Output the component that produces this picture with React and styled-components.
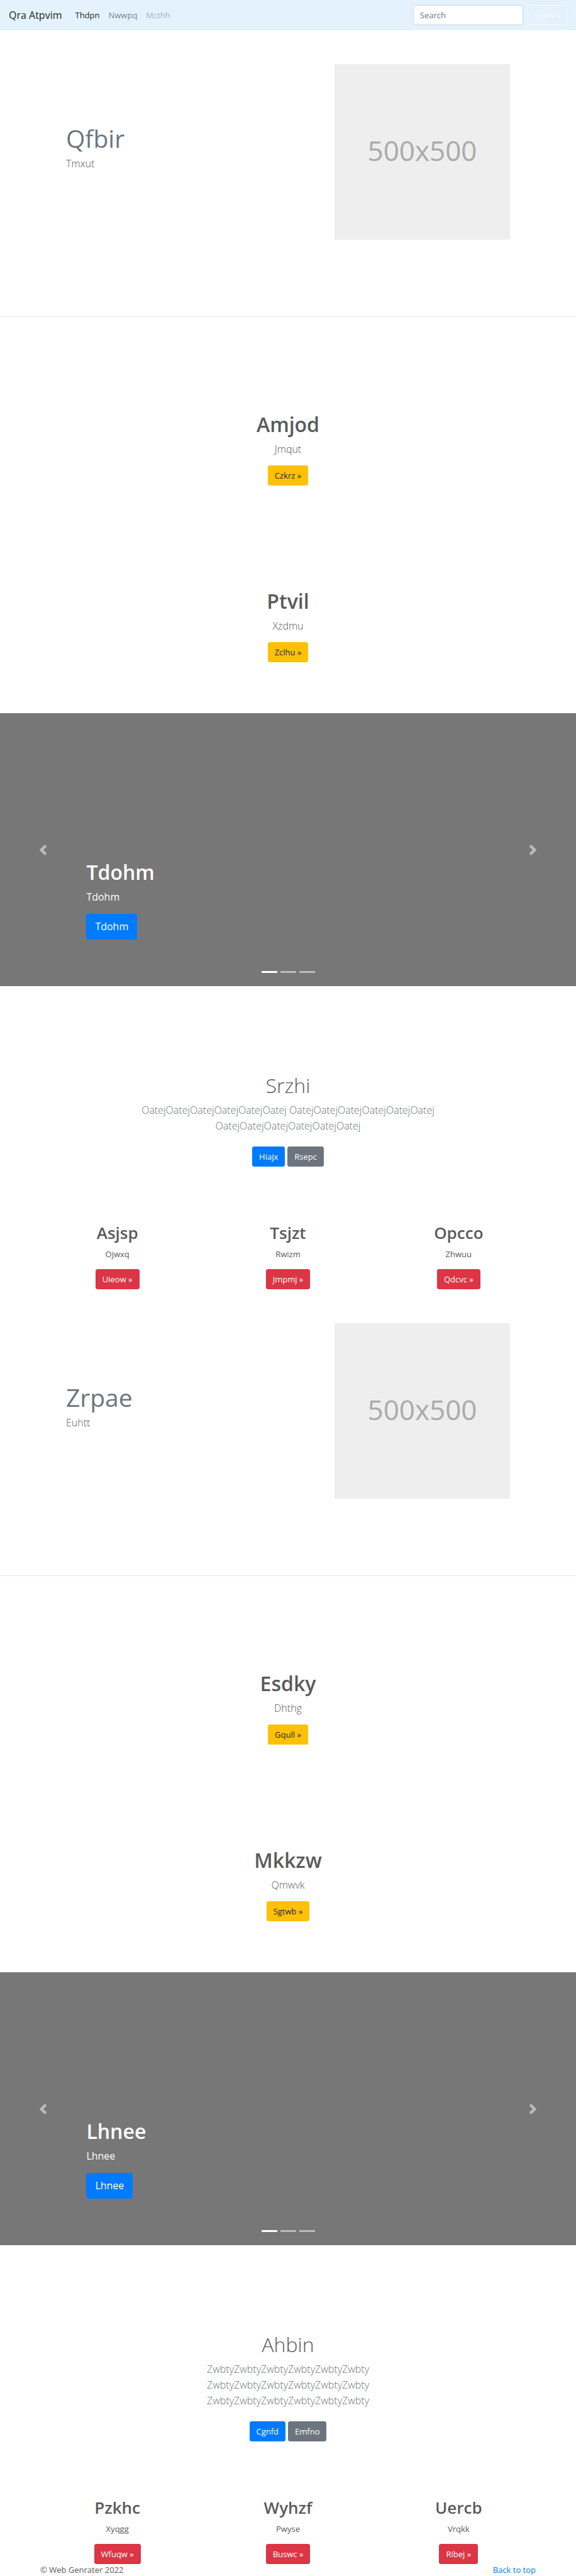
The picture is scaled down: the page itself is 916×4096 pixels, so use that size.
import React from "react";
import styled, { createGlobalStyle } from "styled-components";

const GlobalStyle = createGlobalStyle`
  *, *::before, *::after { box-sizing: border-box; }
  body {
    margin: 0;
    background: #fff;
    color: #5a5a5a;
    font-family: "Open Sans", "Noto Sans", sans-serif;
    font-size: 13px;
    line-height: 20px;
  }
  h1, h2, p, ul { margin: 0; padding: 0; }
  button, input { font: inherit; }
`;

const Navbar = styled.nav`
  display: flex;
  align-items: center;
  padding: 8px 14px;
  background: #e3f2fd;
`;

const Brand = styled.a`
  margin-right: 14px;
  color: rgba(0, 0, 0, 0.9);
  font-size: 16px;
  line-height: 25px;
  text-decoration: none;
`;

const NavList = styled.ul`
  display: flex;
  flex: 1;
  list-style: none;
`;

const linkColors = {
  active: "rgba(0, 0, 0, 0.9)",
  normal: "rgba(0, 0, 0, 0.5)",
  disabled: "rgba(0, 0, 0, 0.3)",
};

const NavLink = styled.a`
  display: block;
  padding: 6px 7px;
  color: ${(p) => linkColors[p.$state]};
  text-decoration: none;
`;

const SearchForm = styled.form`
  display: flex;
  gap: 7px;
`;

const SearchInput = styled.input`
  width: 175px;
  height: 32px;
  padding: 5px 10px;
  border: 1px solid #ced4da;
  border-radius: 4px;
  background: #fff;
  color: #495057;
  &::placeholder { color: #6c757d; opacity: 1; }
`;

const buttonKinds = {
  primary: ["#007bff", "#fff", "#007bff"],
  secondary: ["#6c757d", "#fff", "#6c757d"],
  warning: ["#ffc107", "#212529", "#ffc107"],
  danger: ["#dc3545", "#fff", "#dc3545"],
  outline: ["transparent", "#f8f9fa", "#f8f9fa"],
};

const Button = styled.button`
  padding: ${(p) => (p.$large ? "7px 13px" : "5px 10px")};
  border: 1px solid ${(p) => buttonKinds[p.$kind][2]};
  border-radius: ${(p) => (p.$large ? 4 : 3)}px;
  background: ${(p) => buttonKinds[p.$kind][0]};
  color: ${(p) => buttonKinds[p.$kind][1]};
  font-size: ${(p) => (p.$large ? 16 : 13)}px;
  line-height: ${(p) => (p.$large ? 25 : 20)}px;
  cursor: pointer;
`;

const Container = styled.div`
  max-width: 814px;
  margin: 0 auto;
  padding: 0 13px;
`;

const Hero = styled.section`
  padding: 54px 28px 122px;
`;

const HeroRow = styled.div`
  display: grid;
  grid-template-columns: minmax(0, 7fr) minmax(0, 5fr);
`;

const HeroColumn = styled.div`
  padding: 0 13px;
`;

const HeroText = styled(HeroColumn)`
  padding-top: 94px;
`;

const HeroTitle = styled.h2`
  margin-bottom: 4px;
  color: #6c757d;
  font-size: 39px;
  font-weight: 400;
  line-height: 48px;
`;

const Lead = styled.p`
  color: ${(p) => (p.$muted ? "#6c757d" : "inherit")};
  font-size: 16px;
  font-weight: 300;
  line-height: 25px;
`;

const Placeholder = styled.div`
  display: flex;
  align-items: center;
  justify-content: center;
  aspect-ratio: 1;
  padding-bottom: 6px;
  background: #eee;
  color: #aaa;
  font-size: 44px;
  line-height: 60px;
`;

const Divider = styled.hr`
  margin: 0 0 68px;
  border: 0;
  border-top: 1px solid rgba(0, 0, 0, 0.1);
`;

const Feature = styled.section`
  display: flex;
  flex-direction: column;
  align-items: center;
  padding: 82px 13px 81px;
  text-align: center;
`;

const Title = styled.h1`
  margin-bottom: 7px;
  font-size: 32px;
  font-weight: ${(p) => (p.$light ? 300 : 600)};
  line-height: 41px;
`;

const FeatureLead = styled(Lead)`
  margin-bottom: 13px;
`;

const Carousel = styled.section`
  position: relative;
  display: flex;
  align-items: flex-end;
  height: 434px;
  padding: 0 15% 74px;
  background: #777;
  color: #fff;
`;

const CaptionText = styled.p`
  margin-bottom: 14px;
  font-size: 16px;
  line-height: 25px;
`;

const Control = styled.button`
  position: absolute;
  top: 0;
  bottom: 0;
  ${(p) => p.$side}: 0;
  display: flex;
  align-items: center;
  justify-content: center;
  width: 15%;
  padding: 0;
  border: 0;
  background: none;
  opacity: 0.5;
  cursor: pointer;
`;

const Indicators = styled.div`
  position: absolute;
  right: 0;
  bottom: 21px;
  left: 0;
  display: flex;
  justify-content: center;
  gap: 5px;
`;

const Indicator = styled.button`
  width: 25px;
  height: 3px;
  padding: 0;
  border: 0;
  background: #fff;
  opacity: ${(p) => (p.$active ? 1 : 0.5)};
`;

const Intro = styled.section`
  max-width: 500px;
  margin: 0 auto;
  padding: 137px 0 89px;
  text-align: center;
`;

const IntroActions = styled.div`
  display: flex;
  justify-content: center;
  gap: 4px;
  margin-top: 20px;
`;

const Cards = styled.section`
  display: grid;
  grid-template-columns: repeat(3, minmax(0, 1fr));
  max-width: 814px;
  margin: 0 auto;
`;

const Card = styled.article`
  display: flex;
  flex-direction: column;
  align-items: center;
  text-align: center;
`;

const CardTitle = styled.h2`
  margin-bottom: 8px;
  font-size: 26px;
  font-weight: 600;
  line-height: 32px;
`;

const CardText = styled.p`
  margin-bottom: 14px;
`;

const FooterRow = styled(Container)`
  display: flex;
  justify-content: space-between;
  line-height: 19px;
`;

const FooterLink = styled.a`
  color: #007bff;
  text-decoration: none;
`;

const chevrons = {
  left: "M5.25 0l-4 4 4 4 1.5-1.5-2.5-2.5 2.5-2.5-1.5-1.5z",
  right: "M2.75 0l-1.5 1.5 2.5 2.5-2.5 2.5 1.5 1.5 4-4-4-4z",
};

function CarouselControl({ side, label }) {
  return (
    <Control type="button" $side={side} aria-label={label}>
      <svg width="17" height="17" viewBox="0 0 8 8" fill="#fff" aria-hidden="true">
        <path d={chevrons[side]} />
      </svg>
    </Control>
  );
}

const blocks = [
  {
    hero: ["Qfbir", "Tmxut"],
    features: [
      ["Amjod", "Jmqut", "Czkrz"],
      ["Ptvil", "Xzdmu", "Zclhu"],
    ],
    slide: "Tdohm",
    intro: {
      title: "Srzhi",
      text: "OatejOatejOatejOatejOatejOatej OatejOatejOatejOatejOatejOatej OatejOatejOatejOatejOatejOatej",
      actions: ["Hiajx", "Rsepc"],
    },
    cards: [
      ["Asjsp", "Ojwxq", "Uieow"],
      ["Tsjzt", "Rwizm", "Jmpmj"],
      ["Opcco", "Zhwuu", "Qdcvc"],
    ],
  },
  {
    hero: ["Zrpae", "Euhtt"],
    features: [
      ["Esdky", "Dhthg", "Gqull"],
      ["Mkkzw", "Qmwvk", "Sgtwb"],
    ],
    slide: "Lhnee",
    intro: {
      title: "Ahbin",
      text: "ZwbtyZwbtyZwbtyZwbtyZwbtyZwbty ZwbtyZwbtyZwbtyZwbtyZwbtyZwbty ZwbtyZwbtyZwbtyZwbtyZwbtyZwbty",
      actions: ["Cgnfd", "Emfno"],
    },
    cards: [
      ["Pzkhc", "Xyqgg", "Wfuqw"],
      ["Wyhzf", "Pwyse", "Buswc"],
      ["Uercb", "Vrqkk", "Ribej"],
    ],
  },
];

function Block({ hero, features, slide, intro, cards }) {
  return (
    <>
      <Container>
        <Hero>
          <HeroRow>
            <HeroText>
              <HeroTitle>{hero[0]}</HeroTitle>
              <Lead>{hero[1]}</Lead>
            </HeroText>
            <HeroColumn>
              <Placeholder>500x500</Placeholder>
            </HeroColumn>
          </HeroRow>
        </Hero>
      </Container>
      <Divider />
      {features.map(([title, text, action]) => (
        <Feature key={title}>
          <Title>{title}</Title>
          <FeatureLead>{text}</FeatureLead>
          <Button type="button" $kind="warning">{action} »</Button>
        </Feature>
      ))}
      <Carousel>
        <div>
          <Title as="h2">{slide}</Title>
          <CaptionText>{slide}</CaptionText>
          <Button type="button" $kind="primary" $large>{slide}</Button>
        </div>
        <CarouselControl side="left" label="Previous" />
        <CarouselControl side="right" label="Next" />
        <Indicators>
          <Indicator type="button" aria-label="Slide 1" $active />
          <Indicator type="button" aria-label="Slide 2" />
          <Indicator type="button" aria-label="Slide 3" />
        </Indicators>
      </Carousel>
      <Intro>
        <Title $light>{intro.title}</Title>
        <Lead $muted>{intro.text}</Lead>
        <IntroActions>
          <Button type="button" $kind="primary">{intro.actions[0]}</Button>
          <Button type="button" $kind="secondary">{intro.actions[1]}</Button>
        </IntroActions>
      </Intro>
      <Cards>
        {cards.map(([title, text, action]) => (
          <Card key={title}>
            <CardTitle>{title}</CardTitle>
            <CardText>{text}</CardText>
            <Button type="button" $kind="danger">{action} »</Button>
          </Card>
        ))}
      </Cards>
    </>
  );
}

export default function App() {
  return (
    <>
      <GlobalStyle />
      <header id="top">
        <Navbar>
          <Brand href="#top">Qra Atpvim</Brand>
          <NavList>
            <li><NavLink href="#top" $state="active">Thdpn</NavLink></li>
            <li><NavLink href="#top" $state="normal">Nwwpq</NavLink></li>
            <li><NavLink href="#top" $state="disabled" aria-disabled="true">Mcthh</NavLink></li>
          </NavList>
          <SearchForm>
            <SearchInput type="search" placeholder="Search" aria-label="Search" />
            <Button type="button" $kind="outline">Search</Button>
          </SearchForm>
        </Navbar>
      </header>
      <main>
        {blocks.map((block) => (
          <Block key={block.slide} {...block} />
        ))}
      </main>
      <footer>
        <FooterRow>
          <p>© Web Genrater 2022</p>
          <FooterLink href="#top">Back to top</FooterLink>
        </FooterRow>
      </footer>
    </>
  );
}
